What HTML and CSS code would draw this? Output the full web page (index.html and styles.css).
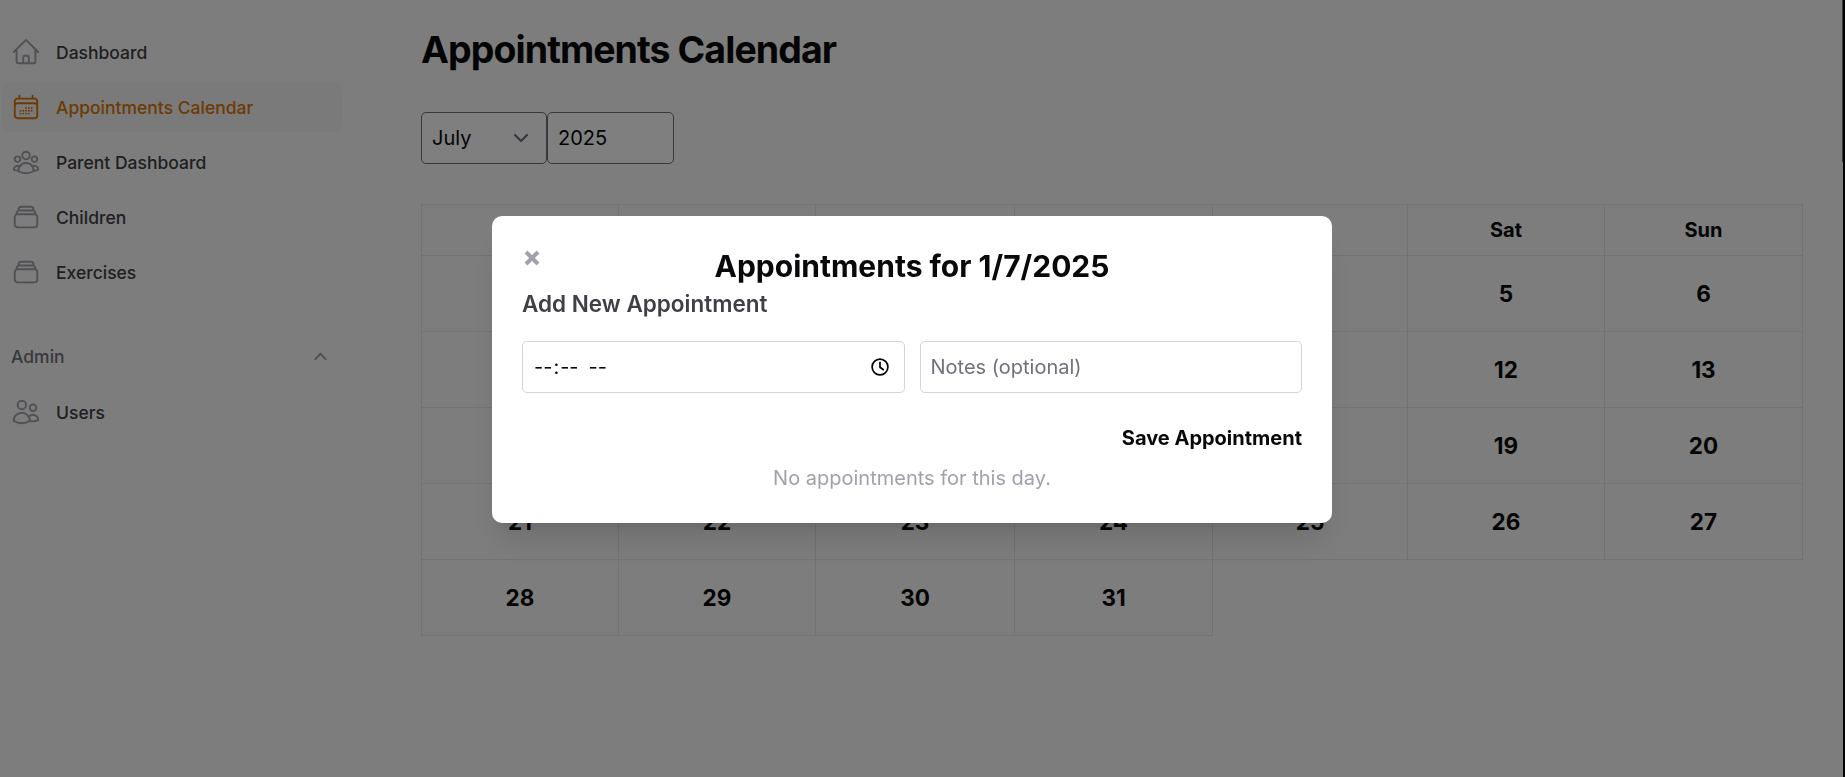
FILE: index.html
```
<!DOCTYPE html>
<html lang="en">
<head>
<meta charset="utf-8">
<title>Appointments Calendar</title>
<link rel="stylesheet" href="styles.css">
</head>
<body>
<div class="app">
  <aside class="sidebar">
    <nav>
      <ul class="nav-list">
        <li class="nav-item">
          <svg class="icon" viewBox="0 0 24 24"><path d="m2.25 12 8.954-8.955c.44-.439 1.152-.439 1.591 0L21.75 12M4.5 9.75v10.125c0 .621.504 1.125 1.125 1.125H9.75v-4.875c0-.621.504-1.125 1.125-1.125h2.25c.621 0 1.125.504 1.125 1.125V21h4.125c.621 0 1.125-.504 1.125-1.125V9.75M8.25 21h8.25"/></svg>
          <span>Dashboard</span>
        </li>
        <li class="nav-item active">
          <svg class="icon" viewBox="0 0 24 24"><path d="M6.75 3v2.25M17.25 3v2.25M3 18.75V7.5a2.25 2.25 0 0 1 2.25-2.25h13.5A2.25 2.25 0 0 1 21 7.5v11.25m-18 0A2.25 2.25 0 0 0 5.25 21h13.5A2.25 2.25 0 0 0 21 18.75m-18 0v-7.5A2.25 2.25 0 0 1 5.25 9h13.5A2.25 2.25 0 0 1 21 11.25v7.5m-9-6h.008v.008H12v-.008ZM12 15h.008v.008H12V15Zm0 2.25h.008v.008H12v-.008ZM9.75 15h.008v.008H9.75V15Zm0 2.25h.008v.008H9.75v-.008ZM7.5 15h.008v.008H7.5V15Zm0 2.25h.008v.008H7.5v-.008Zm6.75-4.5h.008v.008h-.008v-.008Zm0 2.25h.008v.008h-.008V15Zm0 2.25h.008v.008h-.008v-.008Zm2.25-4.5h.008v.008H16.5v-.008Zm0 2.25h.008v.008H16.5V15Z"/></svg>
          <span>Appointments Calendar</span>
        </li>
        <li class="nav-item">
          <svg class="icon" viewBox="0 0 24 24"><path d="M18 18.72a9.094 9.094 0 0 0 3.741-.479 3 3 0 0 0-4.682-2.72m.94 3.198.001.031c0 .225-.012.447-.037.666A11.944 11.944 0 0 1 12 21c-2.17 0-4.207-.576-5.963-1.584A6.062 6.062 0 0 1 6 18.719m12 0a5.971 5.971 0 0 0-.941-3.197m0 0A5.995 5.995 0 0 0 12 12.75a5.995 5.995 0 0 0-5.058 2.772m0 0a3 3 0 0 0-4.681 2.72 8.986 8.986 0 0 0 3.74.477m.94-3.197a5.971 5.971 0 0 0-.94 3.197M15 6.75a3 3 0 1 1-6 0 3 3 0 0 1 6 0Zm6 3a2.25 2.25 0 1 1-4.5 0 2.25 2.25 0 0 1 4.5 0Zm-13.5 0a2.25 2.25 0 1 1-4.5 0 2.25 2.25 0 0 1 4.5 0Z"/></svg>
          <span>Parent Dashboard</span>
        </li>
        <li class="nav-item">
          <svg class="icon" viewBox="0 0 24 24"><path d="M6 6.878V6a2.25 2.25 0 0 1 2.25-2.25h7.5A2.25 2.25 0 0 1 18 6v.878m-12 0c.235-.083.487-.128.75-.128h10.5c.263 0 .515.045.75.128m-12 0A2.25 2.25 0 0 0 4.5 9v.878m13.5-3A2.25 2.25 0 0 1 19.5 9v.878m0 0a2.246 2.246 0 0 0-.75-.128H5.25c-.263 0-.515.045-.75.128m15 0A2.25 2.25 0 0 1 21 12v6a2.25 2.25 0 0 1-2.25 2.25H5.25A2.25 2.25 0 0 1 3 18v-6c0-.98.626-1.813 1.5-2.122"/></svg>
          <span>Children</span>
        </li>
        <li class="nav-item">
          <svg class="icon" viewBox="0 0 24 24"><path d="M6 6.878V6a2.25 2.25 0 0 1 2.25-2.25h7.5A2.25 2.25 0 0 1 18 6v.878m-12 0c.235-.083.487-.128.75-.128h10.5c.263 0 .515.045.75.128m-12 0A2.25 2.25 0 0 0 4.5 9v.878m13.5-3A2.25 2.25 0 0 1 19.5 9v.878m0 0a2.246 2.246 0 0 0-.75-.128H5.25c-.263 0-.515.045-.75.128m15 0A2.25 2.25 0 0 1 21 12v6a2.25 2.25 0 0 1-2.25 2.25H5.25A2.25 2.25 0 0 1 3 18v-6c0-.98.626-1.813 1.5-2.122"/></svg>
          <span>Exercises</span>
        </li>
      </ul>
      <div class="nav-group">
        <span>Admin</span>
        <svg class="group-chevron" viewBox="0 0 20 20"><path d="M14.77 12.79a.75.75 0 0 1-1.06-.02L10 8.832 6.29 12.77a.75.75 0 1 1-1.08-1.04l4.25-4.5a.75.75 0 0 1 1.08 0l4.25 4.5a.75.75 0 0 1-.02 1.06Z"/></svg>
      </div>
      <ul class="nav-list">
        <li class="nav-item">
          <svg class="icon" viewBox="0 0 24 24"><path d="M15 19.128a9.38 9.38 0 0 0 2.625.372 9.337 9.337 0 0 0 4.121-.952 4.125 4.125 0 0 0-7.533-2.493M15 19.128v-.003c0-1.113-.285-2.16-.786-3.07M15 19.128v.106A12.318 12.318 0 0 1 8.624 21c-2.331 0-4.512-.645-6.374-1.766l-.001-.109a6.375 6.375 0 0 1 11.964-3.07M12 6.375a3.375 3.375 0 1 1-6.75 0 3.375 3.375 0 0 1 6.75 0Zm8.25 2.25a2.625 2.625 0 1 1-5.25 0 2.625 2.625 0 0 1 5.25 0Z"/></svg>
          <span>Users</span>
        </li>
      </ul>
    </nav>
  </aside>

  <main class="main">
    <h1 class="title">Appointments Calendar</h1>
    <div class="filters">
      <div class="field">
        <span>July</span>
        <svg class="select-chevron" viewBox="0 0 20 20"><path d="m6 8 4 4 4-4"/></svg>
      </div>
      <div class="field">2025</div>
    </div>
    <div class="calendar">
      <div class="head">Mon</div><div class="head">Tue</div><div class="head">Wed</div><div class="head">Thu</div><div class="head">Fri</div><div class="head">Sat</div><div class="head">Sun</div>
      <div class="day"></div><div class="day">1</div><div class="day">2</div><div class="day">3</div><div class="day">4</div><div class="day">5</div><div class="day">6</div>
      <div class="day">7</div><div class="day">8</div><div class="day">9</div><div class="day">10</div><div class="day">11</div><div class="day">12</div><div class="day">13</div>
      <div class="day">14</div><div class="day">15</div><div class="day">16</div><div class="day">17</div><div class="day">18</div><div class="day">19</div><div class="day">20</div>
      <div class="day">21</div><div class="day">22</div><div class="day">23</div><div class="day">24</div><div class="day">25</div><div class="day">26</div><div class="day">27</div>
      <div class="day">28</div><div class="day">29</div><div class="day">30</div><div class="day">31</div>
    </div>
  </main>
  <div class="edge"><div class="scroll-thumb"></div></div>
</div>

<div class="overlay">
  <section class="modal">
    <header class="modal-header">
      <span class="close"><svg viewBox="0 0 16 16"><path d="M2 2l12 12M14 2L2 14"/></svg></span>
      <h2 class="modal-title">Appointments for 1/7/2025</h2>
    </header>
    <h3 class="modal-subtitle">Add New Appointment</h3>
    <div class="form-row">
      <div class="input time">
        <span class="time-text"><span class="seg">--</span><span class="colon">:</span><span class="seg">--</span><span class="seg meridiem">--</span></span>
        <svg class="clock" viewBox="0 0 20 20"><circle cx="10" cy="10" r="7.9"/><path d="M10 4.8V10.2L13.8 13"/></svg>
      </div>
      <div class="input placeholder">Notes (optional)</div>
    </div>
    <div class="save">Save Appointment</div>
    <p class="empty">No appointments for this day.</p>
  </section>
</div>
</body>
</html>
```
FILE: styles.css
```
* { box-sizing: border-box; }

body {
  margin: 0;
  height: 777px;
  overflow: hidden;
  background: #fafafa;
  color: #09090b;
  font-family: Inter, "Liberation Sans", sans-serif;
  font-size: 20px;
  line-height: 30px;
}

h1, h2, h3, p, ul { margin: 0; padding: 0; }

.app { display: flex; height: 777px; }

/* Sidebar */
.sidebar {
  flex: none;
  width: 421px;
  padding: 27px 78px 0 1px;
}

.nav-list {
  display: flex;
  flex-direction: column;
  gap: 5px;
  list-style: none;
}

.nav-item {
  display: flex;
  align-items: center;
  gap: 15px;
  height: 50px;
  padding: 0 10px;
  border-radius: 10px;
  color: #3f3f46;
  font-size: 17.5px;
  font-weight: 500;
  line-height: 25px;
}

.nav-item.active { background: #f4f4f5; color: #d97706; }

.icon {
  width: 30px;
  height: 30px;
  fill: none;
  stroke: #a1a1aa;
  stroke-width: 1.5;
  stroke-linecap: round;
  stroke-linejoin: round;
}

.active .icon { stroke: #d97706; }

.nav-group {
  display: flex;
  align-items: center;
  justify-content: space-between;
  height: 45px;
  margin: 37px 0 8px;
  padding: 0 10px;
  color: #71717a;
  font-size: 17.5px;
  font-weight: 500;
}

.group-chevron { width: 25px; height: 25px; fill: #a1a1aa; }

/* Page content */
.main { flex: none; width: 1382px; padding-top: 25px; }

.title {
  font-size: 37.5px;
  font-weight: 700;
  line-height: 50px;
  letter-spacing: -0.94px;
}

.filters { display: flex; margin-top: 37px; }

.field {
  display: flex;
  align-items: center;
  justify-content: space-between;
  width: 126px;
  height: 52px;
  padding: 0 10px;
  border: 1px solid #71717a;
  border-radius: 5px;
  background: #fff;
}

.field + .field { width: 127px; }

.select-chevron {
  width: 30px;
  height: 30px;
  fill: none;
  stroke: #6b7280;
  stroke-width: 1.5;
  stroke-linecap: round;
  stroke-linejoin: round;
}

.calendar {
  display: grid;
  grid-template-columns: 198px 197px 199px 198px 195px 197px 198px;
  grid-template-rows: 52px;
  grid-auto-rows: 76px;
  margin-top: 40px;
}

.head, .day {
  display: flex;
  align-items: center;
  justify-content: center;
  border: solid #e4e4e7;
  border-width: 0 1px 1px 0;
}

.head { border-top-width: 1px; font-weight: 700; }
.day { font-size: 22.5px; font-weight: 700; }
.calendar > :nth-child(7n + 1) { border-left-width: 1px; }

.edge {
  display: flex;
  flex: 1;
  justify-content: flex-end;
  border-right: 2px solid #000;
}

.scroll-thumb { width: 1px; height: 162px; background: #777; }

/* Modal */
.overlay {
  position: fixed;
  inset: 0;
  display: flex;
  align-items: flex-start;
  padding: 216px 0 0 492px;
  background: linear-gradient(rgba(0, 0, 0, .5), rgba(0, 0, 0, .5));
}

.modal {
  width: 840px;
  height: 307px;
  padding: 30px;
  border-radius: 10px;
  background: #fff;
  box-shadow: 0 25px 31px -6px rgba(0, 0, 0, .1), 0 10px 12px -7px rgba(0, 0, 0, .1);
}

.modal-header {
  display: grid;
  grid-template-columns: 20px 1fr 20px;
  height: 40px;
}

.close { display: flex; padding: 4px 0 0 2px; }

.close svg {
  width: 16px;
  height: 16px;
  stroke: #a1a1aa;
  stroke-width: 4;
}

.modal-title {
  font-size: 30px;
  font-weight: 700;
  line-height: 40px;
  text-align: center;
  white-space: nowrap;
}

.modal-subtitle {
  color: #3f3f46;
  font-size: 22.5px;
  font-weight: 600;
  line-height: 35px;
}

.form-row {
  display: grid;
  grid-template-columns: 1fr 1fr;
  gap: 15px;
  margin-top: 20px;
}

.input {
  display: flex;
  align-items: center;
  justify-content: space-between;
  height: 52px;
  padding: 0 10px;
  border: 1px solid #d4d4d8;
  border-radius: 5px;
}

.placeholder { color: #71717a; }
.time-text { display: flex; padding-left: 1px; }
.colon { margin: 0 1px; }
.meridiem { margin-left: 10px; }
.clock { width: 20px; height: 20px; margin-right: 4px; fill: none; stroke: #000; stroke-width: 1.7; }

.save {
  margin-top: 30px;
  font-weight: 700;
  text-align: right;
}

.empty { margin-top: 10px; color: #a1a1aa; text-align: center; }
```
